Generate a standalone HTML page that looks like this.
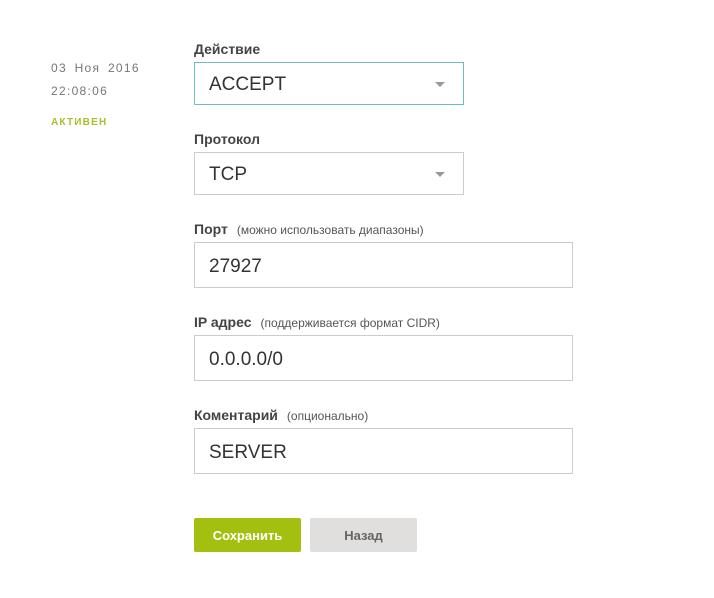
<!DOCTYPE html>
<html><head><meta charset="utf-8"><style>
body{margin:0;background:#fff;width:714px;height:598px;position:relative;font-family:"Liberation Sans",sans-serif;color:#333}
.a{position:absolute}
.d{left:51px;font-size:12px;color:#777;letter-spacing:1.3px;word-spacing:3px}
.lab{position:absolute;left:194px;font-size:14px;font-weight:bold;color:#444}
.lab span{font-weight:normal;font-size:12px;color:#555;margin-left:9px}
.box{position:absolute;left:194px;box-sizing:border-box;border:1px solid #ccc;font-size:19px;color:#333;padding-left:14px;padding-top:3px;display:flex;align-items:center}
.arr{position:absolute;right:18px;top:50%;margin-top:-2px;width:0;height:0;border-left:5px solid transparent;border-right:5px solid transparent;border-top:5px solid #999}
.btn{position:absolute;top:518px;height:34px;width:107px;border-radius:2px;font-size:13px;font-weight:bold;display:flex;align-items:center;justify-content:center}
</style></head><body>
<div class="a d" style="top:61px">03 Ноя 2016</div>
<div class="a d" style="top:84px">22:08:06</div>
<div class="a" style="left:51px;top:117px;font-size:10px;font-weight:bold;color:#a5c12d;letter-spacing:1.2px">АКТИВЕН</div>

<div class="lab" style="top:41px">Действие</div>
<div class="box" style="top:62px;width:270px;height:43px;border-color:#6bbfbf">ACCEPT<div class="arr"></div></div>

<div class="lab" style="top:131px">Протокол</div>
<div class="box" style="top:152px;width:270px;height:43px">TCP<div class="arr"></div></div>

<div class="lab" style="top:221px">Порт<span>(можно использовать диапазоны)</span></div>
<div class="box" style="top:242px;width:379px;height:46px">27927</div>

<div class="lab" style="top:314px">IP адрес<span>(поддерживается формат CIDR)</span></div>
<div class="box" style="top:335px;width:379px;height:46px">0.0.0.0/0</div>

<div class="lab" style="top:407px">Коментарий<span>(опционально)</span></div>
<div class="box" style="top:428px;width:379px;height:46px">SERVER</div>

<div class="btn" style="left:194px;background:#a3bf10;color:#fff">Сохранить</div>
<div class="btn" style="left:310px;background:#e0dfdd;color:#666">Назад</div>
</body></html>
